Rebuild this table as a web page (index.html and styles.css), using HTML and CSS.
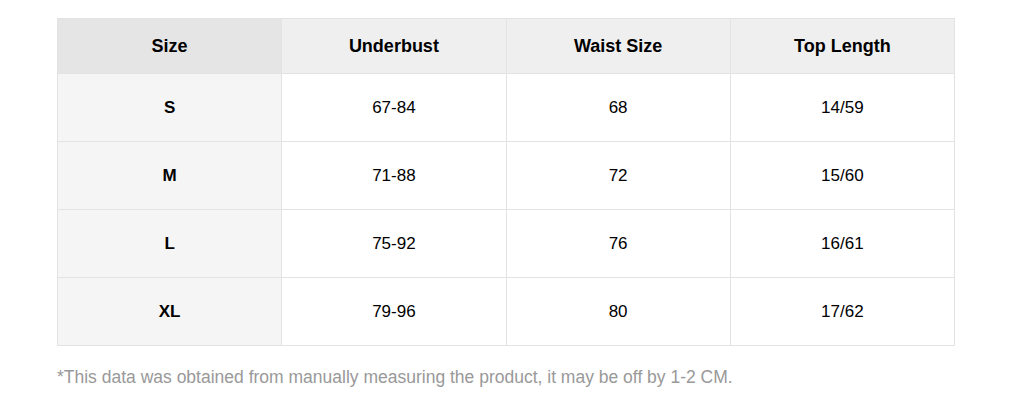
FILE: index.html
```html
<!DOCTYPE html>
<html>
<head>
<meta charset="utf-8">
<link rel="stylesheet" href="styles.css">
</head>
<body>
<div class="wrap">
  <table class="size-table">
    <thead>
      <tr>
        <th class="first">Size</th>
        <th>Underbust</th>
        <th>Waist Size</th>
        <th>Top Length</th>
      </tr>
    </thead>
    <tbody>
      <tr><td class="first">S</td><td>67-84</td><td>68</td><td>14/59</td></tr>
      <tr><td class="first">M</td><td>71-88</td><td>72</td><td>15/60</td></tr>
      <tr><td class="first">L</td><td>75-92</td><td>76</td><td>16/61</td></tr>
      <tr><td class="first">XL</td><td>79-96</td><td>80</td><td>17/62</td></tr>
    </tbody>
  </table>
  <p class="note">*This data was obtained from manually measuring the product, it may be off by 1-2 CM.</p>
</div>
</body>
</html>
```

FILE: styles.css
```css
html, body {
  margin: 0;
  padding: 0;
  background: #ffffff;
}
body {
  font-family: "Liberation Sans", Arial, sans-serif;
  color: #000;
}
.wrap {
  padding: 18px 0 0 57px;
  width: 898px;
}
.size-table {
  width: 898px;
  border-collapse: collapse;
  table-layout: fixed;
}
.size-table th,
.size-table td {
  border: 1px solid #e3e3e3;
  text-align: center;
  font-size: 17px;
  padding: 0;
}
.size-table th {
  height: 54px;
  font-size: 18px;
  font-weight: bold;
  background: #efefef;
}
.size-table th.first {
  background: #e5e5e5;
}
.size-table td {
  height: 67px;
  background: #ffffff;
}
.size-table td.first {
  background: #f5f5f5;
  font-weight: bold;
}
.note {
  margin: 21px 0 0 0;
  font-size: 17.5px;
  color: #999999;
}
```
